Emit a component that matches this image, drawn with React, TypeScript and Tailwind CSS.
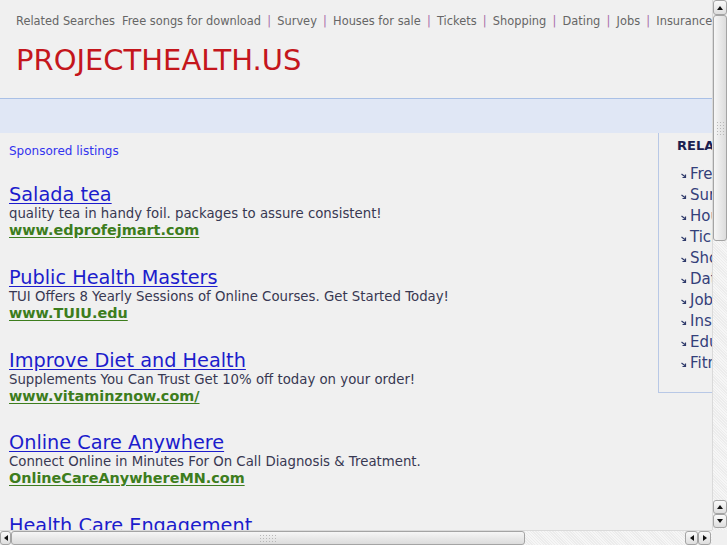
import React from "react";

const navLinks = ["Free songs for download", "Survey", "Houses for sale", "Tickets", "Shopping", "Dating", "Jobs", "Insurance", "Education", "Fitness"];

const ads = [
  { title: "Salada tea", desc: "quality tea in handy foil. packages to assure consistent!", url: "www.edprofejmart.com" },
  { title: "Public Health Masters", desc: "TUI Offers 8 Yearly Sessions of Online Courses. Get Started Today!", url: "www.TUIU.edu" },
  { title: "Improve Diet and Health", desc: "Supplements You Can Trust Get 10% off today on your order!", url: "www.vitaminznow.com/" },
  { title: "Online Care Anywhere", desc: "Connect Online in Minutes For On Call Diagnosis & Treatment.", url: "OnlineCareAnywhereMN.com" },
  { title: "Health Care Engagement", desc: "Drive patient engagement with proven health care programs.", url: "www.healthcareengage.com" },
];

const Arrow = ({ dir }: { dir: "up" | "down" | "left" | "right" }) => {
  const pts = {
    up: "1,6 4,2 7,6",
    down: "1,2 4,6 7,2",
    left: "6,1 2,4 6,7",
    right: "2,1 6,4 2,7",
  }[dir];
  return (
    <svg width="8" height="8" viewBox="0 0 8 8">
      <polygon points={pts} fill="#111" />
    </svg>
  );
};

const Grip = ({ vertical }: { vertical?: boolean }) => (
  <div className={vertical ? "grid grid-cols-3 gap-[2px]" : "grid grid-cols-6 gap-[2px]"}>
    {Array.from({ length: vertical ? 15 : 18 }).map((_, i) => (
      <div key={i} className="w-px h-px bg-[#b8b8b8]" />
    ))}
  </div>
);

const SmallBtn = ({ dir, className }: { dir: "up" | "down" | "left" | "right"; className: string }) => (
  <div className={"flex items-center justify-center rounded-[3px] border border-[#a4a4a4] bg-gradient-to-b from-[#fafafa] to-[#dedede] " + className}>
    <Arrow dir={dir} />
  </div>
);

const App = () => {
  return (
    <div className="w-[727px] h-[545px] flex flex-col bg-[#f0f0f0] overflow-hidden font-['DejaVu_Sans',sans-serif]">
      <div className="flex h-[530px]">
        <div className="w-[712px] h-[530px] overflow-hidden">
          <div className="w-[820px]">
            <div className="pl-[16px] pt-[14px] h-[98px]">
              <div className="flex items-center whitespace-nowrap text-[11.4px] leading-[15px] text-[#666]">
                <span className="mr-[7px]">Related Searches</span>
                {navLinks.map((l, i) => (
                  <span key={l} className="flex items-center">
                    {i > 0 && <span className="mx-[6.2px] text-[#a86ca8]">|</span>}
                    <span>{l}</span>
                  </span>
                ))}
              </div>
              <div className="mt-[15px] text-[29px] leading-[32px] text-[#c4161c]">PROJECTHEALTH.US</div>
            </div>
            <div className="h-[35px] border-t border-[#a9c0e6] bg-[#e0e7f5]" />
            <div className="flex">
              <div className="w-[658px] shrink-0 pl-[9px] pt-[10px]">
                <div className="text-[12px] leading-[16px] text-[#3333ee]">Sponsored listings</div>
                <div className="mt-[25px] flex flex-col gap-[27.75px]">
                  {ads.map((a) => (
                    <div key={a.title} className="flex flex-col items-start">
                      <a className="text-[19.3px] leading-[22px] text-[#1c1ccc] underline underline-offset-[2px]">{a.title}</a>
                      <div className="text-[13.3px] leading-[16px] text-[#383852]">{a.desc}</div>
                      <a className="text-[14.4px] leading-[17px] font-bold text-[#3d7d1d] underline underline-offset-[2px]">{a.url}</a>
                    </div>
                  ))}
                </div>
              </div>
              <div className="flex-1 h-[260px] border-l border-b border-[#b8c8e6] pl-[18px] pt-[5px]">
                <div className="text-[13px] leading-[16px] font-bold text-[#1a2050] whitespace-nowrap">RELATED SEARCHES</div>
                <ul className="mt-[10px] pl-[4px] flex flex-col">
                  {navLinks.map((l) => (
                    <li key={l} className="flex items-center h-[21px] text-[15px] text-[#34407a] whitespace-nowrap">
                      <svg width="6" height="6" viewBox="0 0 6 6" className="mr-[3px] mt-[2px]">
                        <path d="M0.5 1 L4.5 4 M4.5 1.5 V4.5 H1.5" stroke="#2e3a6a" strokeWidth="1.2" fill="none" />
                      </svg>
                      {l}
                    </li>
                  ))}
                </ul>
              </div>
            </div>
          </div>
        </div>
        {/* vertical scrollbar */}
        <div className="w-[15px] h-[530px] flex flex-col bg-[repeating-linear-gradient(45deg,#ececec_0px,#ececec_1px,#f6f6f6_1px,#f6f6f6_2px)] border-l border-[#dadada]">
          <SmallBtn dir="up" className="h-[15px] w-[14px]" />
          <div className="h-[226px] w-[14px] rounded-[3px] border border-[#a4a4a4] bg-gradient-to-r from-[#f6f6f6] to-[#dcdcdc] flex flex-col items-center justify-center">
            <Grip vertical />
          </div>
          <div className="flex-1" />
          <SmallBtn dir="up" className="h-[14px] w-[14px]" />
          <SmallBtn dir="down" className="h-[14px] w-[14px] mb-[2px]" />
        </div>
      </div>
      {/* horizontal scrollbar */}
      <div className="flex h-[15px]">
        <div className="w-[712px] flex items-center bg-[repeating-linear-gradient(45deg,#ececec_0px,#ececec_1px,#f6f6f6_1px,#f6f6f6_2px)] border-t border-[#dadada]">
          <SmallBtn dir="left" className="h-[14px] w-[11px]" />
          <div className="h-[14px] w-[514px] rounded-[3px] border border-[#a4a4a4] bg-gradient-to-b from-[#f6f6f6] to-[#dcdcdc] flex items-center justify-center">
            <Grip />
          </div>
          <div className="flex-1" />
          <SmallBtn dir="left" className="h-[14px] w-[13px]" />
          <SmallBtn dir="right" className="h-[14px] w-[13px] mr-[1px]" />
        </div>
        <div className="w-[15px] bg-[#f0f0f0]" />
      </div>
    </div>
  );
};

export default App;
